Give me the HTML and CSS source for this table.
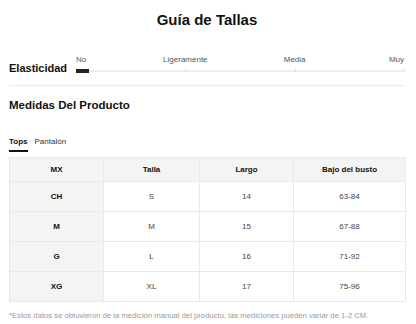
FILE: index.html
```html
<!DOCTYPE html>
<html lang="es">
<head>
<meta charset="utf-8">
<link rel="stylesheet" href="styles.css">
</head>
<body>
<div class="page">
  <h1 class="title">Guía de Tallas</h1>
  <div class="elastic">
    <div class="elastic-label">Elasticidad</div>
    <div class="scale">
      <div class="scale-labels">
        <span class="lbl" style="left:0%">No</span>
        <span class="lbl mid" style="left:33.333%">Ligeramente</span>
        <span class="lbl mid" style="left:66.667%">Media</span>
        <span class="lbl end" style="left:100%">Muy</span>
      </div>
      <div class="track">
        <span class="tick" style="left:33.333%"></span>
        <span class="tick" style="left:66.667%"></span>
        <span class="tick" style="left:100%"></span>
        <span class="fill"></span>
      </div>
    </div>
  </div>
  <div class="divider"></div>
  <h2 class="section">Medidas Del Producto</h2>
  <div class="tabs">
    <span class="tab active">Tops</span>
    <span class="tab">Pantalón</span>
  </div>
  <table class="sizes">
    <colgroup>
      <col class="c1"><col class="c2"><col class="c3"><col class="c4">
    </colgroup>
    <thead>
      <tr><th>MX</th><th>Talla</th><th>Largo</th><th>Bajo del busto</th></tr>
    </thead>
    <tbody>
      <tr><th>CH</th><td>S</td><td>14</td><td>63-84</td></tr>
      <tr><th>M</th><td>M</td><td>15</td><td>67-88</td></tr>
      <tr><th>G</th><td>L</td><td>16</td><td>71-92</td></tr>
      <tr><th>XG</th><td>XL</td><td>17</td><td>75-96</td></tr>
    </tbody>
  </table>
  <p class="note">*Estos datos se obtuvieron de la medición manual del producto, las mediciones pueden variar de 1-2 CM.</p>
</div>
</body>
</html>
```
FILE: styles.css
```css
* { box-sizing: border-box; }
html, body { margin: 0; padding: 0; background: #fff; }
body { font-family: "Liberation Sans", Arial, sans-serif; color: #222; }
.page { padding: 0 11px 0 9px; width: 416px; }
.title {
  margin: 0;
  padding-top: 11px;
  height: 55px;
  font-size: 15px;
  line-height: 17px;
  font-weight: bold;
  text-align: center;
  color: #111;
}
.elastic { display: flex; align-items: flex-start; height: 30px; }
.elastic-label {
  width: 67px;
  padding-top: 7px;
  font-size: 11px;
  line-height: 13px;
  font-weight: bold;
  color: #111;
}
.scale { flex: 1; margin-right: 1px; }
.scale-labels { position: relative; height: 15px; font-size: 8px; line-height: 9px; color: #555; }
.lbl { position: absolute; top: 0; white-space: nowrap; }
.lbl.mid { transform: translateX(-50%); }
.lbl.end { transform: translateX(-100%); }
.track { position: relative; height: 2px; background: #eeeeee; margin-top: 0; }
.tick { position: absolute; top: -1px; width: 1px; height: 3px; background: #dddddd; }
.fill { position: absolute; left: 0; top: -1px; width: 13px; height: 4px; background: #222; }
.divider { height: 1px; background: #ececec; }
.section {
  margin: 0;
  padding-top: 12px;
  height: 50px;
  font-size: 11.5px;
  line-height: 14px;
  font-weight: bold;
  color: #111;
}
.tabs { display: flex; gap: 7px; height: 21px; }
.tab { font-size: 8px; line-height: 10px; color: #333; padding-top: 1px; height: 16px; }
.tab.active { font-weight: bold; color: #111; border-bottom: 2px solid #111; }
.sizes {
  width: 396px;
  border-collapse: collapse;
  table-layout: fixed;
  font-size: 8px;
  text-align: center;
}
.c1 { width: 94px; } .c2 { width: 96px; } .c3 { width: 94px; } .c4 { width: 112px; }
.sizes th, .sizes td { border: 1px solid #e9e9e9; padding: 0; }
.sizes thead th { height: 24px; background: #f4f4f4; font-weight: bold; color: #111; }
.sizes tbody th { background: #f4f4f4; font-weight: bold; color: #111; }
.sizes tbody td, .sizes tbody th { height: 30px; }
.sizes td { color: #444; }
.note { margin: 9px 0 0; font-size: 7.7px; line-height: 10px; color: #999; white-space: nowrap; }
```
